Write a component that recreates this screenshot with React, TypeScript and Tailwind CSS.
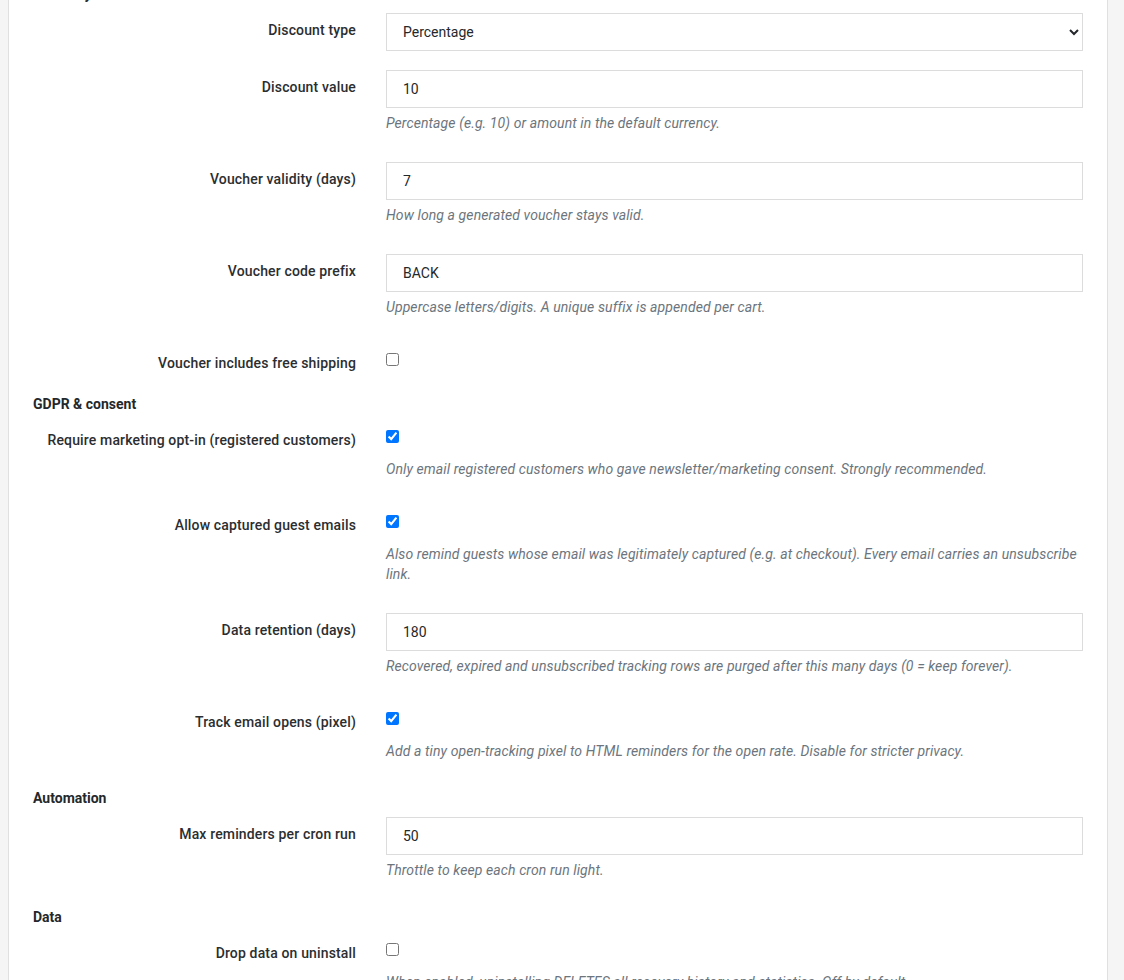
import React from 'react'

type Field =
  | { kind: 'heading'; title: string }
  | { kind: 'select'; label: string; value: string; options: string[]; help?: string }
  | { kind: 'text'; label: string; value: string; help?: string }
  | { kind: 'check'; label: string; checked: boolean; help?: string }

const fields: Field[] = [
  { kind: 'heading', title: 'Recovery voucher' },
  { kind: 'select', label: 'Discount type', value: 'Percentage', options: ['Percentage', 'Fixed amount'] },
  { kind: 'text', label: 'Discount value', value: '10', help: 'Percentage (e.g. 10) or amount in the default currency.' },
  { kind: 'text', label: 'Voucher validity (days)', value: '7', help: 'How long a generated voucher stays valid.' },
  { kind: 'text', label: 'Voucher code prefix', value: 'BACK', help: 'Uppercase letters/digits. A unique suffix is appended per cart.' },
  { kind: 'check', label: 'Voucher includes free shipping', checked: false },
  { kind: 'heading', title: 'GDPR & consent' },
  {
    kind: 'check',
    label: 'Require marketing opt-in (registered customers)',
    checked: true,
    help: 'Only email registered customers who gave newsletter/marketing consent. Strongly recommended.',
  },
  {
    kind: 'check',
    label: 'Allow captured guest emails',
    checked: true,
    help: 'Also remind guests whose email was legitimately captured (e.g. at checkout). Every email carries an unsubscribe link.',
  },
  {
    kind: 'text',
    label: 'Data retention (days)',
    value: '180',
    help: 'Recovered, expired and unsubscribed tracking rows are purged after this many days (0 = keep forever).',
  },
  {
    kind: 'check',
    label: 'Track email opens (pixel)',
    checked: true,
    help: 'Add a tiny open-tracking pixel to HTML reminders for the open rate. Disable for stricter privacy.',
  },
  { kind: 'heading', title: 'Automation' },
  { kind: 'text', label: 'Max reminders per cron run', value: '50', help: 'Throttle to keep each cron run light.' },
  { kind: 'heading', title: 'Data' },
  {
    kind: 'check',
    label: 'Drop data on uninstall',
    checked: false,
    help: 'When enabled, uninstalling DELETES all recovery history and statistics. Off by default.',
  },
]

const Help = ({ text }: { text?: string }) =>
  text ? (
    <p className="mt-[5px] mb-[10px] text-[14px] leading-[20px] italic tracking-[0.1px] text-[#6c757d]">{text}</p>
  ) : null

const Row = ({ f }: { f: Field }) => {
  if (f.kind === 'heading') {
    return <h3 className="h-[27px] text-[14px] leading-[16px] font-bold text-[#25282b]">{f.title}</h3>
  }

  return (
    <div className="grid grid-cols-[323px_697px] gap-x-[30px] mb-[19px]">
      <label className="pt-[8px] text-right text-[14px] leading-[18px] font-medium tracking-[0.15px] text-[#2b2e31]">
        {f.label}
      </label>
      <div>
        {f.kind === 'select' && (
          <select
            defaultValue={f.value}
            className="w-full h-[38px] border border-[#dcdcdc] bg-white pl-[12px] pr-2 text-[14px] text-[#25282b]"
          >
            {f.options.map((o) => (
              <option key={o}>{o}</option>
            ))}
          </select>
        )}
        {f.kind === 'text' && (
          <input
            type="text"
            defaultValue={f.value}
            className="w-full h-[38px] border border-[#dcdcdc] bg-white px-[16px] text-[14px] text-[#25282b] outline-none"
          />
        )}
        {f.kind === 'check' && (
          <div className="h-[31px] pt-[3px]">
            <input type="checkbox" defaultChecked={f.checked} />
          </div>
        )}
        <Help text={f.help} />
      </div>
    </div>
  )
}

export default function App() {
  return (
    <div
      className="min-h-screen bg-[#f5f5f5] pl-[8px] pr-[16px] overflow-hidden"
      style={{ fontFamily: 'Roboto, "Liberation Sans", sans-serif' }}
    >
      <div className="bg-white border-x border-[#e0e0e0] px-[24px] -mt-[14px] pb-10">
        {fields.map((f, i) => (
          <Row key={i} f={f} />
        ))}
      </div>
    </div>
  )
}
